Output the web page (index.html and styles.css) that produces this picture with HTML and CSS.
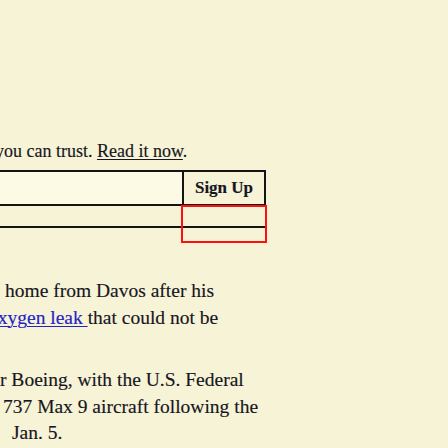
FILE: index.html
```html
<!DOCTYPE html>
<html lang="en">
<head>
<meta charset="utf-8">
<title>Newsletter</title>
<link rel="stylesheet" href="styles.css">
</head>
<body>
<main class="page">
  <p class="lead">you can trust. <a class="lead-link" href="#">Read it now</a>.</p>

  <form class="signup">
    <div class="signup-row">
      <input class="signup-input" type="email" aria-label="Email address">
      <button class="signup-btn" type="button">Sign Up</button>
    </div>
    <div class="signup-extra"></div>
    <div class="signup-error"></div>
  </form>

  <p class="story story-a">
    <span class="line line-a1">home from Davos after his</span>
    <span class="line line-a2"><a class="story-link" href="#">oxygen leak </a>that could not be</span>
  </p>

  <p class="story story-b">
    <span class="line line-b1">r Boeing, with the U.S. Federal</span>
    <span class="line line-b2">737 Max 9 aircraft following the</span>
    <span class="line line-b3">Jan. 5.</span>
  </p>
</main>
</body>
</html>
```

FILE: styles.css
```css
html, body {
  margin: 0;
  padding: 0;
}

body {
  background: #f7f3d6;
  color: #161622;
  font-family: "Liberation Serif", "Times New Roman", serif;
  -webkit-text-stroke: 0.15px currentColor;
  overflow: hidden;
}

.page {
  padding-top: 140px;
}

.lead {
  margin: 0 0 0 -5px;
  font-size: 18px;
  line-height: 22px;
  white-space: nowrap;
}

.lead-link {
  color: inherit;
  text-decoration: underline;
  text-decoration-thickness: 1px;
  text-underline-offset: 2px;
}

.signup {
  position: relative;
  margin: 8px 0 0 -10px;
  width: 276px;
}

.signup-row {
  display: flex;
  height: 36px;
}

.signup-input {
  flex: 1;
  min-width: 0;
  box-sizing: border-box;
  height: 36px;
  margin: 0;
  border: 2px solid #141414;
  border-right: none;
  background: #fcf9e4;
  font: inherit;
  outline: none;
}

.signup-btn {
  box-sizing: border-box;
  width: 84px;
  height: 36px;
  margin: 0;
  border: 2px solid #141414;
  background: #f7f3d6;
  color: #161622;
  font-family: "Liberation Serif", "Times New Roman", serif;
  font-weight: 700;
  font-size: 17px;
  padding: 0;
  cursor: pointer;
}

.signup-extra {
  height: 20px;
  border-bottom: 2px solid #141414;
}

.signup-error {
  position: absolute;
  right: -1px;
  top: 35px;
  width: 86px;
  height: 38px;
  box-sizing: border-box;
  border: 2px solid #ff1010;
}

.story {
  margin: 0;
  font-size: 19.5px;
  line-height: 26.5px;
  white-space: nowrap;
}

.story-a {
  margin-top: 50px;
}

.story-b {
  margin-top: 36px;
}

.line {
  display: block;
}

.line-a1 { padding-left: 5px; }
.line-a2 { margin-left: -12px; }
.line-b1 { padding-left: 0; }
.line-b2 { padding-left: 3px; }
.line-b3 { padding-left: 12px; }

.story-link {
  color: #2323c8;
  text-decoration: underline;
  text-decoration-thickness: 1px;
  text-underline-offset: 2px;
}
```
